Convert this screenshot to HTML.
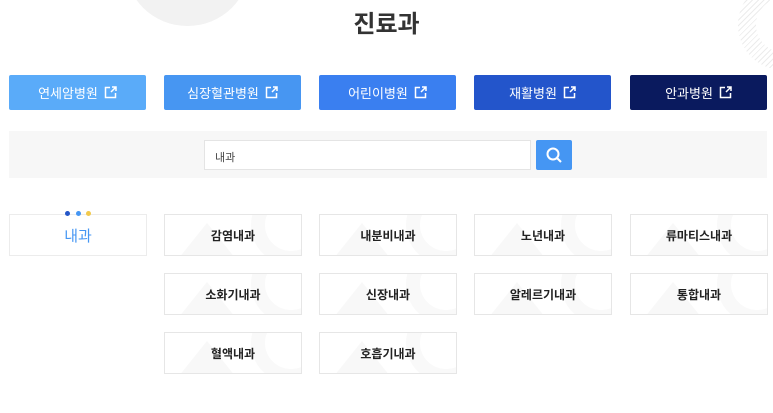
<!DOCTYPE html>
<html><head><meta charset="utf-8"><style>
*{margin:0;padding:0;box-sizing:border-box}
body{width:773px;height:413px;background:#fff;position:relative;overflow:hidden;font-family:"Liberation Sans","Noto Sans CJK KR",sans-serif}
.circ{position:absolute;left:125px;top:-100px;width:125px;height:126px;border-radius:0 0 62px 62px;background:#f2f2f2}
h1{position:absolute;left:0;width:773px;top:4px;text-align:center;font-size:24px;font-weight:bold;color:#333}
.hatch{position:absolute;left:738px;top:-20px;width:90px;height:90px;border-radius:50%;background:repeating-linear-gradient(135deg,#ececec 0 1px,transparent 1px 4px)}
.hatch:after{content:"";position:absolute;left:18px;top:18px;width:54px;height:54px;border-radius:50%;background:#fff}
.btn{position:absolute;top:75px;height:35px;width:137px;color:#fff;font-size:13px;display:flex;align-items:center;justify-content:center;gap:6px;border-radius:2px}
.btn svg{width:13px;height:13px}
.band{position:absolute;left:9px;top:131px;width:758px;height:47px;background:#f7f7f7}
.inp{position:absolute;left:204px;top:140px;width:327px;height:30px;background:#fff;border:1px solid #e4e4e4;font-size:11px;color:#444;padding:8px 0 0 10px}
.sb{position:absolute;left:536px;top:140px;width:36px;height:30px;background:#4596f3;border-radius:2px;display:flex;align-items:center;justify-content:center}
.card{position:absolute;width:138px;height:42px;border:1px solid #e6e6e6;background:#fff;font-size:12px;font-weight:bold;color:#222;display:flex;align-items:center;justify-content:center;overflow:hidden}
.card .tri{position:absolute;left:10px;top:8px;width:0;height:0;border-left:32px solid transparent;border-right:32px solid transparent;border-bottom:40px solid #f8f8f8}
.card .ring{position:absolute;right:-30px;top:-30px;width:80px;height:80px;border-radius:50%;border:14px solid #f9f9f9}
.card span{position:relative}
.sel{position:absolute;left:9px;top:214px;width:138px;height:42px;border:1px solid #ececec;color:#4596f3;font-size:15px;display:flex;align-items:center;justify-content:center}
.dot{position:absolute;top:211px;width:5px;height:5px;border-radius:50%;z-index:2}
</style></head><body>
<div class="circ"></div>
<div class="hatch"></div>
<h1>진료과</h1>
<div class="btn" style="left:9px;background:#5aabf9">연세암병원 <svg viewBox="0 0 13 13" fill="none" stroke="#fff" stroke-width="1.5"><path d="M6 1.5H1.5v10h10V7"/><path d="M7 6l5-5M8 1h4v4"/></svg></div>
<div class="btn" style="left:164px;background:#4796f2">심장혈관병원 <svg viewBox="0 0 13 13" fill="none" stroke="#fff" stroke-width="1.5"><path d="M6 1.5H1.5v10h10V7"/><path d="M7 6l5-5M8 1h4v4"/></svg></div>
<div class="btn" style="left:319px;background:#3a7ff0">어린이병원 <svg viewBox="0 0 13 13" fill="none" stroke="#fff" stroke-width="1.5"><path d="M6 1.5H1.5v10h10V7"/><path d="M7 6l5-5M8 1h4v4"/></svg></div>
<div class="btn" style="left:474px;background:#2355cb">재활병원 <svg viewBox="0 0 13 13" fill="none" stroke="#fff" stroke-width="1.5"><path d="M6 1.5H1.5v10h10V7"/><path d="M7 6l5-5M8 1h4v4"/></svg></div>
<div class="btn" style="left:630px;background:#0a1a5e">안과병원 <svg viewBox="0 0 13 13" fill="none" stroke="#fff" stroke-width="1.5"><path d="M6 1.5H1.5v10h10V7"/><path d="M7 6l5-5M8 1h4v4"/></svg></div>
<div class="band"></div>
<div class="inp">내과</div>
<div class="sb"><svg width="16" height="16" viewBox="0 0 16 16" fill="none" stroke="#fff" stroke-width="2"><circle cx="7" cy="7" r="5.5"/><path d="M11 11l4 4"/></svg></div>
<div class="sel">내과</div>
<span class="dot" style="left:65px;background:#2456c8"></span>
<span class="dot" style="left:76px;background:#4596f3"></span>
<span class="dot" style="left:86px;background:#f2c94c"></span>
<div class="card" style="left:164px;top:214px"><i class="tri"></i><i class="ring"></i><span>감염내과</span></div>
<div class="card" style="left:319px;top:214px"><i class="tri"></i><i class="ring"></i><span>내분비내과</span></div>
<div class="card" style="left:474px;top:214px"><i class="tri"></i><i class="ring"></i><span>노년내과</span></div>
<div class="card" style="left:630px;top:214px"><i class="tri"></i><i class="ring"></i><span>류마티스내과</span></div>
<div class="card" style="left:164px;top:273px"><i class="tri"></i><i class="ring"></i><span>소화기내과</span></div>
<div class="card" style="left:319px;top:273px"><i class="tri"></i><i class="ring"></i><span>신장내과</span></div>
<div class="card" style="left:474px;top:273px"><i class="tri"></i><i class="ring"></i><span>알레르기내과</span></div>
<div class="card" style="left:630px;top:273px"><i class="tri"></i><i class="ring"></i><span>통합내과</span></div>
<div class="card" style="left:164px;top:332px"><i class="tri"></i><i class="ring"></i><span>혈액내과</span></div>
<div class="card" style="left:319px;top:332px"><i class="tri"></i><i class="ring"></i><span>호흡기내과</span></div>
</body></html>
